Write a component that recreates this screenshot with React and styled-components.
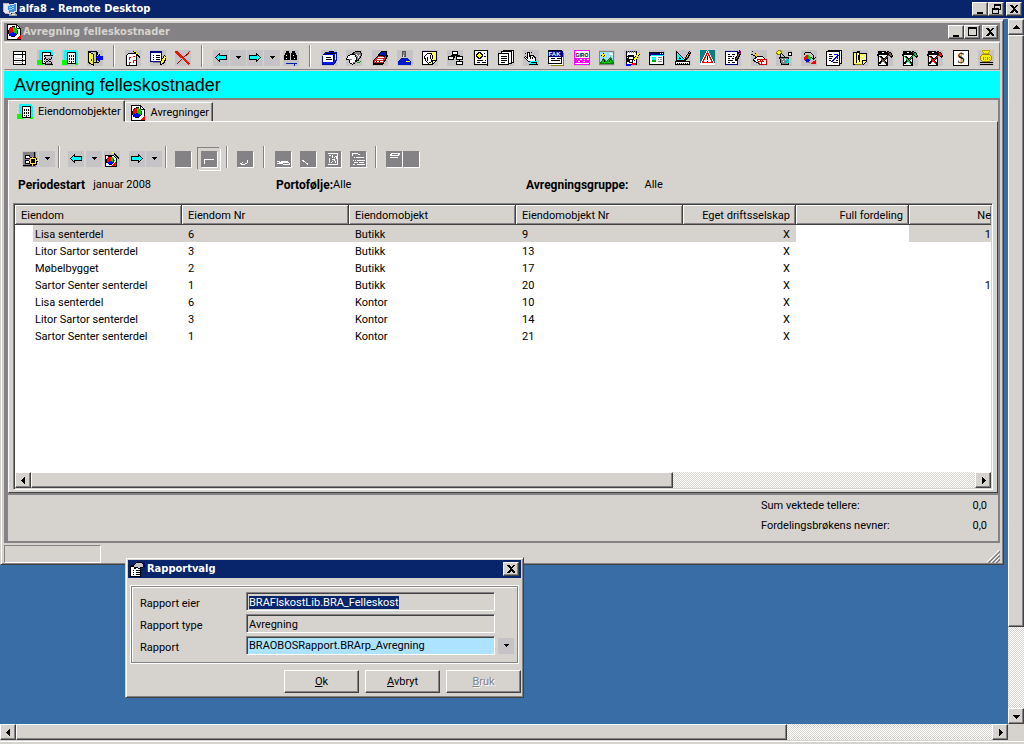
import React, { useEffect, useRef } from "react"
import styled, { createGlobalStyle, css } from "styled-components"

const FACE = "#d6d3ce"
const LIGHT = "#ffffff"
const SHADOW = "#848284"
const DARK = "#424142"
const NAVY = "#08246b"
const DESKTOP = "#396da5"
const CELL = "#c6c3c6"

// one stroke or shape of a small icon
function P({ d, c = "#000", f = "none", w = 1 }) {
  return <path d={d} stroke={c} fill={f} strokeWidth={w} />
}

function Icon({ name }) {
  return (
    <svg width="16" height="16" viewBox="-0.5 -0.5 16 16" shapeRendering="crispEdges" aria-hidden="true">
      {icons[name]}
    </svg>
  )
}

const pie = (
  <>
    <P d="M1 0h9l4 4v11h-13z" f="#fff" />
    <P d="M10 0v4h4" />
    <path d="M6.500 7.500v-5a5 5 0 0 0-4.300 7.500z" fill="#f00" />
    <path d="M6.500 7.500v-5a5 5 0 0 1 4.300 7.500z" fill="#0c0" />
    <path d="M6.500 7.500l-4.300 2.500a5 5 0 0 0 8.600 0z" fill="#00f" />
    <P d="M5 2h3M3 3h1M9 3h1M2 5v4M11 5v4M3 10l1 1M10 10l-1 1M5 12h3" />
    <P d="M11 14l3-3v3z" c="#f00" f="#f00" />
  </>
)

const building = (
  <>
    <path d="M1 -0.500h12l2.500 2v11h-14.500z" fill="#0ff" />
    <path d="M-0.500 9.500h6v5h-6zM12 12.500h3v2h-3z" fill="#0f0" />
    <P d="M5 2h8v11h-8z" f="#fff" />
    <P d="M7 4v2M9 4v2M11 4v2M7 7v2M9 7v2M11 7v2M7 10v1M11 10v1M9 10v3" />
  </>
)

const crossed = (color) => (
  <>
    <P d="M1 4h9v11h-9z" f="#fff" />
    <P d="M1 1h7l3 2v1h-10zM0 3v2" f="#000" />
    <P d="M10 1l3 1 2 3-1 2-3-3z" f={color} />
    <P d="M3 6l7 8M2 13l8-7" w={2} />
    <P d="M2 6l7 8M3 13l8-8" c={color} />
    <P d="M4 2h2" c="#fff" />
  </>
)

const icons = {
  pie,
  building,
  remote: (
    <>
      <P d="M1 2h5l1 1v9l-4 0-2-2z" c="#b5b6bd" f="#e7e7ef" />
      <P d="M5 4l9-2v8l-8 2z" c="#ddd" f="#3a8ee6" />
      <P d="M7 6l5-1M7 8l5-1" c="#9cf" />
      <P d="M7 13l6-1 1 2h-7z" c="#999" f="#eee" />
    </>
  ),
  props: (
    <>
      <P d="M0 5h10v10h-10z" f="#fff" />
      <P d="M2 9h1M5 9h4M2 11h1M5 11h4M2 13h1M5 13h4M0 4h6" />
      <P d="M3 4l3-3h5l3 2v2l-3 1-2 1-3-1-2 1z" f={CELL} />
      <P d="M14 0v6M13 1v4" c="#000084" />
    </>
  ),
  form: (
    <>
      <P d="M1 1h12v13h-12z" f="#fff" />
      <P d="M1 4h12M1 10h12M10 1v13" />
      <P d="M2 12h8M2 8h8" c={CELL} />
    </>
  ),
  buildingTime: (
    <>
      {building}
      <path d="M7 5h9v11h-9z" fill={CELL} />
      <P d="M7 5h8M7 14h8M8 6v2l3 2-3 2v2M14 6v2l-3 2 3 2v2" />
      <P d="M10 8h2M9 13h4" c={SHADOW} />
    </>
  ),
  door: (
    <>
      <P d="M1 1h8v11h-8z" f={CELL} />
      <P d="M1 1l5 3v11l-5-3z" f="#ff0" />
      <P d="M4 8v2M0 12h2M6 12h5M10 1v3" />
      <P d="M9 7l3-3v2h3v3h-3v2z" c="#00f" f="#00f" />
    </>
  ),
  wizardPage: (
    <>
      <P d="M1 5l2-2h8v12h-10z" f="#fff" />
      <P d="M3 7h2M4 6v3M7 10h3M8 9v3M3 12h2M4 11v3M7 6h2" c="#f00" />
      <P d="M8 1l7 7M9 1l6 6" />
      <P d="M8 1h1M10 3h1" c="#ff0" />
    </>
  ),
  editList: (
    <>
      <P d="M0 1h11v10h-11z" c="#000084" f="#fff" />
      <P d="M0 2h11" c="#000084" />
      <P d="M2 5h1M5 5h4M2 7h1M5 7h4M2 9h1M5 9h4" />
      <P d="M14 5l-4 6v3l3-1 3-6z" f="#ff0" />
      <P d="M2 12h7" c={SHADOW} />
    </>
  ),
  remove: (
    <>
      <P d="M1 1l13 13M0 1l6 6" c="#e71408" w={2} />
      <P d="M14 1l-13 13" c="#e71408" />
      <P d="M14 2l-6 5M5 10l-4 4" c="#b50800" />
    </>
  ),
  left: <P d="M2 7l4-4v2h7v4h-7v2z" f="#0ff" />,
  right: <P d="M13 7l-4-4v2h-7v4h7v2z" f="#0ff" />,
  down: <P d="M5 6h5M6 7h3M7 8h1" />,
  find: (
    <>
      <P d="M3 1h2v2h1v6h-5v-3l1-3h1zM9 1h2v2h1l1 3v3h-5v-6h1z" f="#000" />
      <P d="M3 4v1M10 4v1M3 7v1M11 7v1" c="#fff" />
      <P d="M2 13h11M11 12v3" c="#0021a5" />
    </>
  ),
  fileBox: (
    <>
      <P d="M1 6l3-4h11v8l-3 4h-11z" c="#0010a5" f="#0018e7" />
      <P d="M2 5h9v6h-9z" c="#fff" f="#fff" />
      <P d="M4 7h5M4 9h6M3 5l2-2h8M12 4v6M7 1h5v2" />
      <P d="M14 3v6" c="#fff" />
    </>
  ),
  cards: (
    <>
      <P d="M5 4l4-3h5l1 3-2 5-4 2" f={SHADOW} />
      <P d="M1 6l3-2h4l2 3-1 5-3 2-3-2v-3l-3 0z" f="#fff" />
      <P d="M7 6v3M10 4l2 2M11 8l2-3" c="#fff" />
      <P d="M10 12h3M13 11h1" c="#00a500" />
      <P d="M2 9h3M6 12h3" c={SHADOW} />
    </>
  ),
  ledger: (
    <>
      <P d="M1 10l5-5h9l-3 6-2 3h-9z" f="#c63131" />
      <P d="M6 4l3-3h5v3l-2 2z" f="#0018a5" />
      <P d="M2 11h8M5 7h6M4 9h6" c="#fff" />
      <P d="M1 13h9M11 12l4-6M6 5h5M3 11h1M6 11h1" />
    </>
  ),
  person: (
    <>
      <P d="M1 14v-3l3-3h6l3 3v3z" c="#0018c6" f="#0018c6" />
      <P d="M5 1h3v5h-3z" c="#525152" f="#848284" />
      <P d="M6 4v2" c="#ffdf42" />
      <P d="M8 11h4" c="#ff0" />
    </>
  ),
  noteCall: (
    <>
      <P d="M0 1h14v9l-4 4h-10z" f="#ffff63" />
      <path d="M0.500 1.500h7v12h-7z" fill="#fff" />
      <P d="M2 6l3-3h4l1 3-1 5-3 2-3-3z" f="#fff" />
      <P d="M5 6v4M8 4v4M14 10h-4v4" />
    </>
  ),
  tree: (
    <>
      <P d="M5 1h5v3h-5zM1 6h5v3h-5zM9 6h6v3h-6zM9 11h6v3h-6z" f="#fff" />
      <P d="M7 4v3M3 5h9M12 9v2M5 4h5M1 9h5M9 9h6M9 14h6" />
    </>
  ),
  sealDoc: (
    <>
      <P d="M1 0h13v14h-13z" f="#fff" />
      <P d="M4 3l2-1 2 1 1 2-1 2-2 1-2-1-1-2z" f="#ff0" />
      <P d="M10 3h1M10 6h2M3 10h6M11 10h1M3 12h3M8 12h4M14 1v14M2 14h12" />
    </>
  ),
  docs: (
    <>
      <P d="M5 0h10v12h-10z" f="#fff" />
      <P d="M3 1h10v12h-10z" f="#fff" />
      <P d="M0 3h10v11h-10z" f="#fff" />
      <P d="M2 6h6M2 8h6M2 10h6M2 12h4" />
    </>
  ),
  hand: (
    <>
      <P d="M4 8v-6h2v4l1-1 2 0 2 1 1 2v3h-7l-4-4 1-1z" f="#fff" />
      <P d="M7 5v3M9 6v2M2 3l1 1M8 2l-1 1" />
      <path d="M6 10h7v4h-7z" fill="#0ff" />
      <P d="M5 14h9M13 11v3M7 12h5" />
    </>
  ),
  invoice: (
    <>
      <path d="M2 2h14v14h-14z" fill="#848200" />
      <path d="M0 0h14v14h-14z" fill="#fff" />
      <path d="M0 0h14v6h-14z" fill="#000084" />
      <P d="M0 0h13v13h-13zM2 8h4M8 8h4M2 10h9" />
      <text x="0" y="5" fill="#fff" fontSize="6" fontWeight="bold" fontFamily="Liberation Sans, sans-serif">FAK</text>
    </>
  ),
  giro: (
    <>
      <path d="M0 0h15v14h-15z" fill="#fff" />
      <P d="M0 0h15v14h-15z" c="#f0f" />
      <path d="M0 7h16v5h-16z" fill="#f0f" />
      <P d="M2 9h1M5 9h2M9 9h1M12 9h2M3 11h2M8 11h2" c="#fff" />
      <text x="1" y="6" fontSize="5" fontWeight="bold" fontFamily="Liberation Sans, sans-serif">GIRO</text>
    </>
  ),
  picture: (
    <>
      <P d="M0 1h14v13h-14z" c={SHADOW} f="#9cdfff" />
      <P d="M1 13l3-5 3 3 4-4 3 6z" c="#008200" f="#00c300" />
      <P d="M3 4h2v1h-2z" c="#ff0" w={2} />
      <P d="M9 3h3M10 4h3" c="#fff" />
      <P d="M3 3h1M2 4v1M5 4v1M3 6h1M4 9l2 3M11 9l-2 3" />
    </>
  ),
  contact: (
    <>
      <P d="M2 1h10v13h-10z" f="#fff" />
      <P d="M3 0v2M5 0v2M7 0v2M9 0v2M11 0v2" c={SHADOW} />
      <P d="M3 7l2-2h3l2 3v2M3 7v4" w={2} />
      <P d="M5 9h3v3h-3z" f="#fff" />
      <P d="M1 14h5" c="#00f" w={2} />
      <P d="M7 13h4" c="#f00" w={2} />
      <P d="M14 3l-4 7" w={3} />
      <P d="M14 3l-4 7" c="#ff0" w={2} />
    </>
  ),
  browser: (
    <>
      <P d="M0 2h14v12h-14z" f="#fff" />
      <path d="M0 2h14v3h-14z" fill="#000084" />
      <P d="M10 3h1M12 3h1" c="#fff" />
      <P d="M2 7h4M2 9h4" c="#0ff" w={2} />
      <P d="M2 10h4" c="#0a0" w={2} />
      <P d="M8 7h4M8 9h1M10 9h2M8 11h4" c={SHADOW} />
      <P d="M1 5h13" c="#0ff" />
    </>
  ),
  draft: (
    <>
      <P d="M1 1v9h9z" f="#0ff" />
      <P d="M4 7v1h1z" f="#fff" />
      <P d="M0 11h14v3h-14z" f="#fff" />
      <P d="M2 12v1M4 12v1M6 12v1M8 12v1M10 12v1M12 12v1" />
      <P d="M14 1l-4 6v2l2-1 3-6z" f="#ffa500" />
    </>
  ),
  warning: (
    <>
      <path d="M-0.500 -0.500h15v15h-15z" fill="#008284" />
      <P d="M7 1l6 12h-12z" c="#fff" f="#fff" w={2} />
      <P d="M7 2l5 10h-10z" c="#f00" />
      <P d="M7 5v4M7 10v1" />
    </>
  ),
  editDoc: (
    <>
      <P d="M0 1h12v13h-12z" c="#000084" f="#fff" />
      <P d="M2 4h2M6 4h3M2 6h4M7 6h1M2 8h2M6 8h2M2 10h5M2 12h2M6 12h3" />
      <P d="M14 1l-4 7v2l2-1 3-6z" f="#848200" />
      <P d="M13 1h2v2" c="#840084" />
    </>
  ),
  payOut: (
    <>
      <P d="M1 1l7 6M0 4l3 1 3 3" c="#000" />
      <P d="M2 2l6 5" c="#ffc600" />
      <P d="M2 9l4-3h5l2 2v4l-5 1-5-2z" f="#fff" />
      <P d="M6 9h9v5h-7z" c="#c00" f="#fff" />
      <P d="M8 12l1-2 1 2 1-2 1 2" c="#f00" />
    </>
  ),
  robot: (
    <>
      <P d="M0 2l2-2h2l1 2-1 2h-3z" c="#848200" f="#ff0" />
      <P d="M5 3l4 4M4 4l1 5" />
      <P d="M3 7h9v7h-7z" f={SHADOW} />
      <P d="M5 9h1M8 9h1M6 11h1M9 12h1" c="#fff" />
      <P d="M10 9h2v3h-2z" c="#00c6c6" />
      <P d="M12 2h3v3h-3zM11 6l1-1" f="#fff" />
    </>
  ),
  cycle: (
    <>
      <P d="M2 5l2-3h5l3 3v4M10 7l2 2 2-2" />
      <path d="M6 8v-3.500a3.500 3.500 0 0 0-3 5.200z" fill="#f00" />
      <path d="M6 8v-3.500a3.500 3.500 0 0 1 3 5.200z" fill="#0c0" />
      <path d="M6 8l-3 1.700a3.500 3.500 0 0 0 6 0z" fill="#00f" />
      <P d="M10 13l4-3v3z" c="#f00" f="#f00" />
      <P d="M4 12h4" c={SHADOW} />
    </>
  ),
  docArrow: (
    <>
      <P d="M2 0h13v13h-13z" f="#fff" />
      <P d="M0 1h13v14h-13z" f="#fff" />
      <P d="M2 4h3M2 6h4M2 8h3M2 10h2M9 10h2M6 12h5" />
      <P d="M4 12l7-7M7 4h4v4" c="#00f" />
      <P d="M5 12l7-7" c="#00f" />
    </>
  ),
  clip: (
    <>
      <P d="M1 2h5l1 1h7v8l-3 3h-10z" f="#ff6" />
      <P d="M4 12v-10l1-1h2v10M6 4v5M10 14v-4h4" />
      <P d="M9 6h1M11 8h1M9 9h1M12 5h1" c="#fff" />
      <P d="M2 14h8" c="#848200" />
    </>
  ),
  crossDark: crossed("#73594a"),
  crossGreen: crossed("#00c342"),
  crossRed: crossed("#e71818"),
  dollar: (
    <>
      <P d="M0 0h15v15h-15z" f="#fff" />
      <text x="4" y="12" fontSize="14" fontFamily="Liberation Serif, serif">$</text>
    </>
  ),
  moneyBag: (
    <>
      <P d="M4 0h7l-1 3h-5z" c="#c6a200" f="#ff0" />
      <P d="M4 4h7l2 2v3l-2 2h-7l-2-2v-3z" c="#a58200" f="#ffef00" />
      <P d="M5 6v3M7 6v1M7 8v1M9 6v3M11 6v1M11 8v1" c="#a58200" />
      <P d="M1 12h13M1 14h13" />
    </>
  ),
  gears: (
    <>
      <path d="M0 0h13v15h-13z" fill="#848284" />
      <P d="M0 14h12v-14" />
      <P d="M3 4h4v3h-4zM3 9h4v3h-4z" f="#fff" />
      <P d="M8 6h5v6h-5zM10 5v9M6 9h9" w={2} />
      <P d="M8 7h5v5h-5zM10 5v2M10 12v2M6 9h2M13 9h2M7 6l1 1M14 6l-1 1M7 13l1-1M14 13l-1-1" c="#ffdf42" />
    </>
  ),
  pieWizard: (
    <>
      <P d="M1 4h8l3 3v8h-11z" f="#fff" />
      <path d="M6 9v-4a4 4 0 0 0-3.500 6z" fill="#f00" />
      <path d="M6 9v-4a4 4 0 0 1 3.500 6z" fill="#0c0" />
      <path d="M6 9l-3.500 2a4 4 0 0 0 7 0z" fill="#00f" />
      <P d="M3 5h4M2 7v4M9 7v4M4 13h3M8 1l7 7M9 1l6 6" />
      <P d="M8 14l3-3v3z" c="#f00" f="#f00" />
      <P d="M7 1h2v1" c="#ff0" />
    </>
  ),
  none: null,
  corner: <P d="M3 12v-4h9" c="#fff" />,
  hook: <P d="M3 12l2 1h2l3-2v-3M4 11h1" c="#fff" />,
  sheet: <P d="M1 10l3-0M5 10h6l3 1M1 12h5l3 1h5v-2M3 11h9" c="#fff" />,
  slash: <P d="M2 9l2 1 2 2 2 1" c="#fff" />,
  sketch: (
    <P d="M2 2h10v11h-10M3 4h2M7 3v3M10 5l-2 2M4 6v5M6 8h3M5 12l2-2M9 9l2 3M11 4v3" c="#fff" />
  ),
  lines: (
    <P d="M2 4v-2h5l3 2M3 6h1M5 6h8M2 9h1M4 9h1M6 9h8M3 11h4M8 11h5M2 13h2M6 13h8" c="#fff" />
  ),
  stack: <P d="M5 2h8l-1 2h-8zM4 4h7M3 6h8" c="#fff" />,
}

const MODULES = [
  ["fileBox", "Arkiv"],
  ["cards", "Kontakter"],
  ["ledger", "Hovedbok"],
  ["person", "Leietaker"],
  ["noteCall", "Notat"],
  ["tree", "Struktur"],
  ["sealDoc", "Kontrakt"],
  ["docs", "Dokumenter"],
  ["hand", "Velg"],
  ["invoice", "Faktura"],
  ["giro", "Giro"],
  ["picture", "Bilde"],
  ["contact", "Kontaktperson"],
  ["browser", "Vindu"],
  ["draft", "Tegning"],
  ["warning", "Varsel"],
  ["editDoc", "Rediger dokument"],
  ["payOut", "Utbetaling"],
  ["robot", "Automatikk"],
  ["cycle", "Avregning"],
  ["docArrow", "Rapport"],
  ["clip", "Vedlegg"],
  ["crossDark", "Slett utkast"],
  ["crossGreen", "Slett godkjent"],
  ["crossRed", "Slett avvist"],
  ["dollar", "Valuta"],
  ["moneyBag", "Bank"],
]

const COLUMNS = [
  { title: "Eiendom", width: 167 },
  { title: "Eiendom Nr", width: 167 },
  { title: "Eiendomobjekt", width: 167 },
  { title: "Eiendomobjekt Nr", width: 167 },
  { title: "Eget driftsselskap", width: 113, right: true },
  { title: "Full fordeling", width: 113, right: true },
  { title: "Ne", right: true, cut: true },
]

const ROWS = [
  ["Lisa senterdel", "6", "Butikk", "9", "X", "", "1"],
  ["Litor Sartor senterdel", "3", "Butikk", "13", "X", "", ""],
  ["Møbelbygget", "2", "Butikk", "17", "X", "", ""],
  ["Sartor Senter senterdel", "1", "Butikk", "20", "X", "", "1"],
  ["Lisa senterdel", "6", "Kontor", "10", "X", "", ""],
  ["Litor Sartor senterdel", "3", "Kontor", "14", "X", "", ""],
  ["Sartor Senter senterdel", "1", "Kontor", "21", "X", "", ""],
]

const Tool = ({ icon, label, disabled, pressed, plain }) => (
  <ToolButton type="button" aria-label={label} disabled={disabled} $pressed={pressed} $plain={plain}>
    <Icon name={icon} />
  </ToolButton>
)

const GLYPHS = {
  minimize: <path d="M3 9h6v2h-6z" />,
  maximize: <path d="M2 1h9v9h-9zM3 3v6h7v-6z" fillRule="evenodd" />,
  restore: <path d="M4 1h7v6h-2v4h-7v-6h2zM5 3v2h4v1h1v-3zM3 7v3h5v-3z" fillRule="evenodd" />,
  close: <path d="M2 2h2l2 2 2-2h2l-3 4 3 3v1h-2l-2-2-2 2h-2v-1l3-3z" />,
}

const Caption = ({ kind, label }) => (
  <CaptionButton type="button" aria-label={label}>
    <svg width="12" height="12" viewBox="0 0 12 12" shapeRendering="crispEdges">
      {GLYPHS[kind]}
    </svg>
  </CaptionButton>
)

const ARROWS = {
  up: "M4 2h1v1h1v1h1v1h1v1h-7v-1h1v-1h1v-1h1z",
  down: "M1 3h7v1h-1v1h-1v1h-1v1h-1v-1h-1v-1h-1v-1h-1z",
  left: "M6 1v7h-1v-1h-1v-1h-1v-1h-1v-1h1v-1h1v-1h1v-1z",
  right: "M3 1v7h1v-1h1v-1h1v-1h1v-1h-1v-1h-1v-1h-1v-1z",
}

const Arrow = ({ to, label }) => (
  <ArrowButton type="button" aria-label={label}>
    <svg width="9" height="9" viewBox="0 0 9 9" shapeRendering="crispEdges">
      <path d={ARROWS[to]} />
    </svg>
  </ArrowButton>
)

const HorizontalScroll = ({ size }) => (
  <ScrollRow>
    <Arrow to="left" label="Rull til venstre" />
    <Track>
      <Thumb $size={size} />
    </Track>
    <Arrow to="right" label="Rull til høyre" />
  </ScrollRow>
)

const VerticalScroll = ({ size }) => (
  <ScrollColumn>
    <Arrow to="up" label="Rull opp" />
    <Track $vertical>
      <Thumb $vertical $size={size} />
    </Track>
    <Arrow to="down" label="Rull ned" />
  </ScrollColumn>
)

const MainToolbar = () => (
  <MainTools>
    <Group>
      <Tool icon="form" label="Skjema" plain />
      <Tool icon="buildingTime" label="Eiendomshistorikk" />
      <Tool icon="building" label="Eiendom" />
      <Tool icon="door" label="Avslutt" />
    </Group>
    <Separator $wide />
    <Group>
      <Tool icon="wizardPage" label="Ny" />
      <Tool icon="editList" label="Rediger" />
      <Tool icon="remove" label="Slett" />
    </Group>
    <Separator $wide />
    <Group $gap={1}>
      <Tool icon="left" label="Forrige" />
      <Tool icon="down" label="Forrige liste" />
      <Tool icon="right" label="Neste" />
      <Tool icon="down" label="Neste liste" />
    </Group>
    <Group $lead={3}>
      <Tool icon="find" label="Søk" />
    </Group>
    <Separator $wide />
    <Group $fill>
      {MODULES.map(([icon, label]) => (
        <Tool key={icon} icon={icon} label={label} />
      ))}
    </Group>
  </MainTools>
)

const ObjectToolbar = () => (
  <Tools>
    <Group $gap={1}>
      <Tool icon="gears" label="Kjør" />
      <Tool icon="down" label="Kjør valg" />
    </Group>
    <Separator $tight />
    <Group $gap={2}>
      <Tool icon="left" label="Forrige periode" />
      <Tool icon="down" label="Forrige perioder" />
      <Tool icon="pieWizard" label="Ny avregning" />
    </Group>
    <Group $gap={1} $lead={9}>
      <Tool icon="right" label="Neste periode" />
      <Tool icon="down" label="Neste perioder" />
    </Group>
    <Separator $tight />
    <Group $gap={10}>
      <Tool icon="none" label="Fordeling" disabled />
      <Tool icon="corner" label="Hjørne" disabled pressed />
    </Group>
    <Separator />
    <Group>
      <Tool icon="hook" label="Hent" disabled />
    </Group>
    <Separator $wide />
    <Group>
      <Tool icon="sheet" label="Ark" disabled />
      <Tool icon="slash" label="Linje" disabled />
      <Tool icon="sketch" label="Skisse" disabled />
      <Tool icon="lines" label="Liste" disabled />
    </Group>
    <Separator />
    <Group $gap={1}>
      <Tool icon="stack" label="Stabel" disabled />
      <Tool icon="none" label="Tom" disabled />
    </Group>
  </Tools>
)

const ObjectList = () => (
  <ListFrame>
    <ListView>
      <Table>
        <colgroup>
          {COLUMNS.map((col) => (
            <col key={col.title} width={col.width} />
          ))}
        </colgroup>
        <thead>
          <tr>
            {COLUMNS.map((col) => (
              <Th key={col.title} $right={col.right} $cut={col.cut}>
                {col.title}
              </Th>
            ))}
          </tr>
        </thead>
        <tbody>
          {ROWS.map((row, r) => (
            <tr key={r}>
              {row.map((value, i) => (
                <Td
                  key={i}
                  $first={i === 0}
                  $right={COLUMNS[i].right}
                  $cut={COLUMNS[i].cut}
                  $selected={r === 0 && i !== 5}
                >
                  {value}
                </Td>
              ))}
            </tr>
          ))}
        </tbody>
      </Table>
    </ListView>
    <HorizontalScroll size={68} />
  </ListFrame>
)

const ReportDialog = () => {
  const owner = useRef(null)

  useEffect(() => {
    owner.current.focus()
    owner.current.select()
  }, [])

  return (
    <Dialog role="dialog" aria-labelledby="dialog-title">
      <TitleBar>
        <Icon name="props" />
        <TitleText id="dialog-title">Rapportvalg</TitleText>
        <Caption kind="close" label="Lukk" />
      </TitleBar>
      <Fields>
        <Label htmlFor="owner">Rapport eier</Label>
        <Input id="owner" ref={owner} defaultValue="BRAFlskostLib.BRA_Felleskost" readOnly />
        <span />
        <Label htmlFor="type">Rapport type</Label>
        <Input id="type" defaultValue="Avregning" readOnly />
        <span />
        <Label htmlFor="report">Rapport</Label>
        <Select id="report">
          <option>BRAOBOSRapport.BRArp_Avregning</option>
        </Select>
        <Tool icon="down" label="Velg rapport" />
      </Fields>
      <Actions>
        <Button type="button">
          <u>O</u>k
        </Button>
        <Button type="button">
          <u>A</u>vbryt
        </Button>
        <Button type="button" disabled>
          <u>B</u>ruk
        </Button>
      </Actions>
    </Dialog>
  )
}

const App = () => {
  return (
    <>
      <GlobalStyle />
      <Shell>
        <TitleBar $outer>
          <Icon name="remote" />
          <TitleText>alfa8 - Remote Desktop</TitleText>
          <Caption kind="minimize" label="Minimer" />
          <Caption kind="restore" label="Gjenopprett" />
          <Caption kind="close" label="Lukk" />
        </TitleBar>
        <Middle>
          <Desktop>
            <AppWindow>
              <TitleBar $inactive>
                <Icon name="pie" />
                <TitleText>Avregning felleskostnader</TitleText>
                <Caption kind="minimize" label="Minimer" />
                <Caption kind="maximize" label="Maksimer" />
                <Caption kind="close" label="Lukk" />
              </TitleBar>
              <MainToolbar />
              <Heading>Avregning felleskostnader</Heading>
              <Panel>
                <Tabs role="tablist">
                  <Tab type="button" role="tab" aria-selected="true" $active>
                    <Icon name="building" />
                    Eiendomobjekter
                  </Tab>
                  <Tab type="button" role="tab" aria-selected="false">
                    <Icon name="pie" />
                    Avregninger
                  </Tab>
                </Tabs>
                <Page>
                  <ObjectToolbar />
                  <Info>
                    <Fact $gap={8}>
                      <dt>Periodestart</dt>
                      <dd>januar 2008</dd>
                    </Fact>
                    <Fact>
                      <dt>Portofølje:</dt>
                      <dd>Alle</dd>
                    </Fact>
                    <Fact $gap={16}>
                      <dt>Avregningsgruppe:</dt>
                      <dd>Alle</dd>
                    </Fact>
                  </Info>
                  <ObjectList />
                </Page>
                <Summary>
                  <SumRow>
                    <span>Sum vektede tellere:</span>
                    <span>0,0</span>
                  </SumRow>
                  <SumRow>
                    <span>Fordelingsbrøkens nevner:</span>
                    <span>0,0</span>
                  </SumRow>
                </Summary>
              </Panel>
              <StatusBar>
                <StatusCell />
                <svg width="13" height="13" viewBox="0 0 13 13">
                  <path d="M0 12L12 0M4 12l8-8M8 12l4-4" stroke={LIGHT} />
                  <path d="M1 13L13 1M2 13L13 2M5 13l8-8M6 13l7-7M9 13l4-4M10 13l3-3" stroke={SHADOW} />
                </svg>
              </StatusBar>
            </AppWindow>
            <ReportDialog />
          </Desktop>
          <VerticalScroll size={88} />
        </Middle>
        <BottomRow>
          <HorizontalScroll size={79} />
        </BottomRow>
        <BottomEdge />
      </Shell>
    </>
  )
}

const GlobalStyle = createGlobalStyle`
  * {
    box-sizing: border-box;
  }
  body {
    margin: 0;
    background: ${FACE};
    color: #000;
    font-family: Roboto, "Liberation Sans", Arial, sans-serif;
    font-size: 11px;
    line-height: 16px;
  }
  button, input, select {
    margin: 0;
    padding: 0;
    border: 0;
    border-radius: 0;
    outline: 0;
    font: inherit;
    color: inherit;
  }
  svg {
    display: block;
    flex: none;
  }
  ::selection {
    background: ${NAVY};
    color: #fff;
  }
`

const raised = css`
  background: ${FACE};
  border: 1px solid;
  border-color: ${LIGHT} ${DARK} ${DARK} ${LIGHT};
  box-shadow: inset -1px -1px ${SHADOW};
`

const frame = css`
  background: ${FACE};
  border: 1px solid;
  border-color: ${FACE} ${DARK} ${DARK} ${FACE};
  box-shadow: inset 1px 1px ${LIGHT}, inset -1px -1px ${SHADOW};
`

const Shell = styled.div`
  display: flex;
  flex-direction: column;
  min-height: 100vh;
`

const Middle = styled.div`
  display: flex;
  flex: 1;
`

const Desktop = styled.main`
  position: relative;
  flex: 1;
  min-width: 0;
  padding-right: 4px;
  background: ${DESKTOP};
`

const AppWindow = styled.section`
  ${frame}
  padding: 3px 3px 1px;
`

const TitleBar = styled.header`
  display: flex;
  align-items: center;
  height: ${(p) => (p.$outer ? 19 : 18)}px;
  padding: 0 2px;
  border-bottom: ${(p) => (p.$outer ? `1px solid ${FACE}` : "0")};
  background: ${(p) => (p.$inactive ? SHADOW : NAVY)};
  color: ${(p) => (p.$inactive ? FACE : "#fff")};
`

const TitleText = styled.span`
  flex: 1;
  padding-left: 1px;
  font-family: "DejaVu Sans Condensed", "DejaVu Sans", sans-serif;
  font-weight: bold;
  font-size: 11px;
`

const CaptionButton = styled.button`
  ${raised}
  display: flex;
  align-items: center;
  justify-content: center;
  width: 16px;
  height: 14px;
  &:last-child {
    margin-left: 2px;
  }
`

const Tools = styled.div`
  display: flex;
  align-items: flex-start;
  padding: 24px 9px 0;
`

const MainTools = styled(Tools)`
  height: 28px;
  margin: 1px 0;
  padding: 2px 5px 0 7px;
  border: 1px solid;
  border-color: ${LIGHT} ${SHADOW} ${SHADOW} ${FACE};
`

const Group = styled.div`
  display: flex;
  flex: ${(p) => (p.$fill ? "1" : "none")};
  justify-content: ${(p) => (p.$fill ? "space-between" : "flex-start")};
  gap: ${(p) => (p.$fill ? 0 : p.$gap ?? 9)}px;
  padding-top: 5px;
  padding-left: ${(p) => p.$lead ?? 0}px;
`

const Separator = styled.div`
  width: 2px;
  height: 22px;
  margin: 0 ${(p) => (p.$wide ? 10 : 9)}px;
  ${(p) => p.$tight && "margin: 0 8px 0 3px;"}
  border-left: 1px solid ${SHADOW};
  border-right: 1px solid ${LIGHT};
`

const ToolButton = styled.button`
  flex: none;
  width: 16px;
  height: 16px;
  background: ${(p) => (p.$plain ? FACE : CELL)};
  &:disabled {
    background: ${SHADOW};
    box-shadow: 1px 1px ${LIGHT};
    ${(p) =>
      p.$pressed &&
      css`
        box-shadow: 1px 1px ${LIGHT}, 0 0 0 3px ${FACE}, -1px -1px 0 3px ${SHADOW},
          1px 1px 0 3px ${LIGHT};
      `}
  }
`

const Heading = styled.h1`
  margin: 0;
  padding: 1px 10px 0;
  background: #00ffff;
  font-family: "Liberation Sans", Arial, sans-serif;
  font-weight: normal;
  font-size: 18px;
  line-height: 26px;
`

const Panel = styled.div`
  border: 2px solid ${SHADOW};
  border-left-width: 4px;
`

const Tabs = styled.div`
  display: flex;
  align-items: flex-end;
  height: 21px;
`

const Tab = styled.button`
  display: flex;
  align-items: center;
  gap: 5px;
  height: ${(p) => (p.$active ? 22 : 19)}px;
  margin-bottom: ${(p) => (p.$active ? -1 : 0)}px;
  padding: 2px 3px 0 ${(p) => (p.$active ? 8 : 4)}px;
  background: ${FACE};
  border: 1px solid;
  border-color: ${LIGHT} ${DARK} ${FACE} ${LIGHT};
  border-bottom-width: ${(p) => (p.$active ? 1 : 0)}px;
  box-shadow: inset -1px 0 ${SHADOW};
  z-index: 1;
`

const Page = styled.div`
  padding: 0 4px 2px;
  border: 1px solid;
  border-color: ${LIGHT} ${DARK} ${DARK} ${LIGHT};
`

const Info = styled.div`
  display: grid;
  grid-template-columns: 258px 250px auto;
  padding: 9px 5px 10px;
`

const Fact = styled.dl`
  display: flex;
  gap: ${(p) => p.$gap ?? 0}px;
  margin: 0;
  dt {
    font-weight: bold;
    font-size: 12px;
  }
  dd {
    margin: 0;
  }
`

const ListFrame = styled.div`
  padding: 1px;
  background: #fff;
  border: 1px solid;
  border-color: ${SHADOW} ${LIGHT} ${LIGHT} ${SHADOW};
  box-shadow: inset 1px 1px ${DARK}, inset -1px -1px ${FACE};
`

const ListView = styled.div`
  min-height: 267px;
  overflow: hidden;
`

const Table = styled.table`
  width: 100%;
  table-layout: fixed;
  border-collapse: separate;
  border-spacing: 0;
`

const Th = styled.th`
  height: 20px;
  padding: 3px ${(p) => (p.$cut ? 0 : 5)}px 0 6px;
  overflow: hidden;
  background: ${FACE};
  border-bottom: 1px solid ${DARK};
  border-right: ${(p) => (p.$cut ? 0 : 1)}px solid ${DARK};
  box-shadow: inset 1px 1px ${LIGHT}, inset -1px -1px ${SHADOW};
  font-weight: normal;
  line-height: 16px;
  text-align: ${(p) => (p.$right ? "right" : "left")};
`

const Td = styled.td`
  height: 17px;
  padding: 3px ${(p) => (p.$cut ? 0 : 6)}px 0;
  background: ${(p) => (p.$selected ? FACE : "#fff")};
  line-height: 14px;
  text-align: ${(p) => (p.$right ? "right" : "left")};
  white-space: nowrap;
  ${(p) =>
    p.$first &&
    css`
      border-left: 18px solid #fff;
      padding: 3px 0 0 2px;
    `}
`

const Summary = styled.div`
  padding: 1px 11px 5px;
  border-top: 2px solid ${SHADOW};
`

const SumRow = styled.div`
  display: flex;
  justify-content: space-between;
  width: 226px;
  margin-left: auto;
  line-height: 20px;
`

const StatusBar = styled.footer`
  display: flex;
  align-items: flex-end;
  justify-content: space-between;
  padding-top: 2px;
`

const StatusCell = styled.div`
  width: 97px;
  height: 18px;
  border: 1px solid;
  border-color: ${SHADOW} ${LIGHT} ${LIGHT} ${SHADOW};
`

const ScrollRow = styled.div`
  display: flex;
  flex: 1;
  height: 16px;
`

const ScrollColumn = styled.div`
  display: flex;
  flex-direction: column;
  width: 16px;
`

const Track = styled.div`
  display: flex;
  flex-direction: ${(p) => (p.$vertical ? "column" : "row")};
  flex: 1;
  background: repeating-conic-gradient(#fff 0 25%, ${FACE} 0 50%) 0 0 / 2px 2px;
`

const Thumb = styled.div`
  ${raised}
  flex: 0 0 ${(p) => p.$size}%;
`

const ArrowButton = styled.button`
  ${raised}
  display: flex;
  flex: none;
  align-items: center;
  justify-content: center;
  width: 16px;
  height: 16px;
`

const BottomRow = styled.div`
  display: flex;
  padding-right: 16px;
`

const BottomEdge = styled.div`
  height: 4px;
  border-top: 1px solid ${FACE};
  box-shadow: inset 0 1px ${LIGHT};
`

const Dialog = styled.section`
  ${frame}
  position: absolute;
  top: 538px;
  left: 125px;
  width: 399px;
  padding: 2px 2px 4px;
`

const Fields = styled.div`
  display: grid;
  grid-template-columns: 106px 249px 16px;
  align-items: center;
  row-gap: 3px;
  margin: 7px 2px 6px;
  padding: 6px 9px 8px;
  border: 1px solid ${LIGHT};
  box-shadow: inset 0 0 0 1px ${SHADOW}, inset 2px 2px ${LIGHT};
  > button {
    margin-left: 3px;
  }
`

const Label = styled.label`
  padding-top: 5px;
  line-height: 14px;
`

const sunken = css`
  width: 100%;
  height: 19px;
  padding: 1px 2px 0;
  border: 1px solid;
  border-color: ${SHADOW} ${LIGHT} ${LIGHT} ${SHADOW};
  box-shadow: inset 1px 1px ${DARK};
`

const Input = styled.input`
  &&& {
    ${sunken}
    background: ${FACE};
  }
`

const Select = styled.select`
  &&& {
    ${sunken}
    appearance: none;
    background: #ade3ff;
  }
`

const Actions = styled.div`
  display: flex;
  justify-content: flex-end;
  gap: 6px;
`

const Button = styled.button`
  ${raised}
  width: 75px;
  height: 23px;
  &:disabled {
    color: ${SHADOW};
    text-shadow: 1px 1px ${LIGHT};
  }
`

export default App
